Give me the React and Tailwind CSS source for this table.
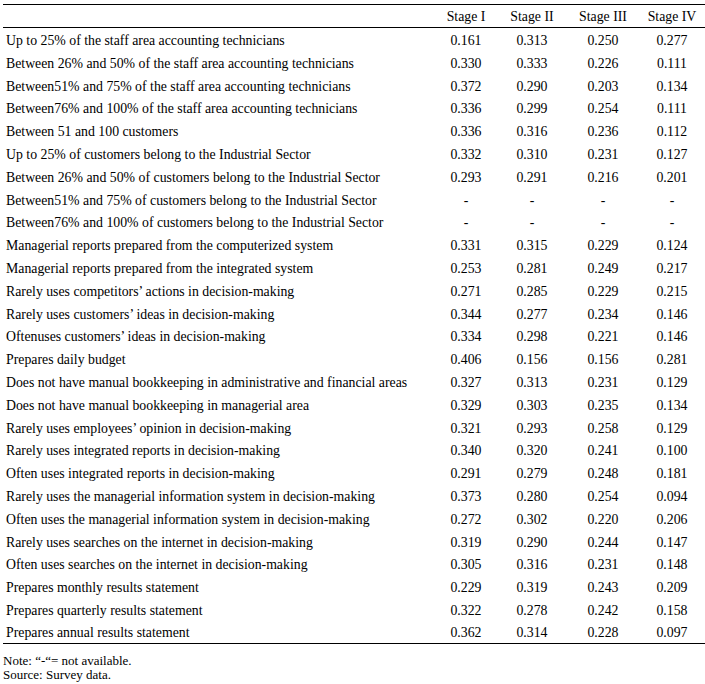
import React from 'react';

const rows = [
  ['Up to 25% of the staff area accounting technicians', '0.161', '0.313', '0.250', '0.277'],
  ['Between 26% and 50% of the staff area accounting technicians', '0.330', '0.333', '0.226', '0.111'],
  ['Between51% and 75% of the staff area accounting technicians', '0.372', '0.290', '0.203', '0.134'],
  ['Between76% and 100% of the staff area accounting technicians', '0.336', '0.299', '0.254', '0.111'],
  ['Between 51 and 100 customers', '0.336', '0.316', '0.236', '0.112'],
  ['Up to 25% of customers belong to the Industrial Sector', '0.332', '0.310', '0.231', '0.127'],
  ['Between 26% and 50% of customers belong to the Industrial Sector', '0.293', '0.291', '0.216', '0.201'],
  ['Between51% and 75% of customers belong to the Industrial Sector', '-', '-', '-', '-'],
  ['Between76% and 100% of customers belong to the Industrial Sector', '-', '-', '-', '-'],
  ['Managerial reports prepared from the computerized system', '0.331', '0.315', '0.229', '0.124'],
  ['Managerial reports prepared from the integrated system', '0.253', '0.281', '0.249', '0.217'],
  ['Rarely uses competitors\u2019 actions in decision-making', '0.271', '0.285', '0.229', '0.215'],
  ['Rarely uses customers\u2019 ideas in decision-making', '0.344', '0.277', '0.234', '0.146'],
  ['Oftenuses customers\u2019 ideas in decision-making', '0.334', '0.298', '0.221', '0.146'],
  ['Prepares daily budget', '0.406', '0.156', '0.156', '0.281'],
  ['Does not have manual bookkeeping in administrative and financial areas', '0.327', '0.313', '0.231', '0.129'],
  ['Does not have manual bookkeeping in managerial area', '0.329', '0.303', '0.235', '0.134'],
  ['Rarely uses employees\u2019 opinion in decision-making', '0.321', '0.293', '0.258', '0.129'],
  ['Rarely uses integrated reports in decision-making', '0.340', '0.320', '0.241', '0.100'],
  ['Often uses integrated reports in decision-making', '0.291', '0.279', '0.248', '0.181'],
  ['Rarely uses the managerial information system in decision-making', '0.373', '0.280', '0.254', '0.094'],
  ['Often uses the managerial information system in decision-making', '0.272', '0.302', '0.220', '0.206'],
  ['Rarely uses searches on the internet in decision-making', '0.319', '0.290', '0.244', '0.147'],
  ['Often uses searches on the internet in decision-making', '0.305', '0.316', '0.231', '0.148'],
  ['Prepares monthly results statement', '0.229', '0.319', '0.243', '0.209'],
  ['Prepares quarterly results statement', '0.322', '0.278', '0.242', '0.158'],
  ['Prepares annual results statement', '0.362', '0.314', '0.228', '0.097'],
];

const App = () => {
  return (
    <div className="bg-white text-black pt-[4px] pl-[3px] w-[705px] h-[684px] [font-family:'Liberation_Serif','Times_New_Roman',serif]">
      <table className="w-[702px] border-collapse text-[13.8px] leading-none table-fixed">
        <colgroup>
          <col className="w-[432px]" />
          <col className="w-[62px]" />
          <col className="w-[70px]" />
          <col className="w-[72px]" />
          <col className="w-[66px]" />
        </colgroup>
        <thead>
          <tr className="h-[23px] border-t border-b border-black">
            <th />
            <th className="font-normal text-center pt-[2px]">Stage I</th>
            <th className="font-normal text-center pt-[2px]">Stage II</th>
            <th className="font-normal text-center pt-[2px]">Stage III</th>
            <th className="font-normal text-center pt-[2px]">Stage IV</th>
          </tr>
        </thead>
        <tbody className="border-b border-black">
          {rows.map((r, i) => (
            <tr key={i} className="h-[22.8px]">
              <td className="pl-[3px] pt-[4px] whitespace-nowrap">{r[0]}</td>
              <td className="text-center pt-[4px]">{r[1]}</td>
              <td className="text-center pt-[4px]">{r[2]}</td>
              <td className="text-center pt-[4px]">{r[3]}</td>
              <td className="text-center pt-[4px]">{r[4]}</td>
            </tr>
          ))}
        </tbody>
      </table>
      <div className="mt-[10px] text-[13px] leading-[14px]">
        <div>Note: “-“= not available.</div>
        <div>Source: Survey data.</div>
      </div>
    </div>
  );
};

export default App;
